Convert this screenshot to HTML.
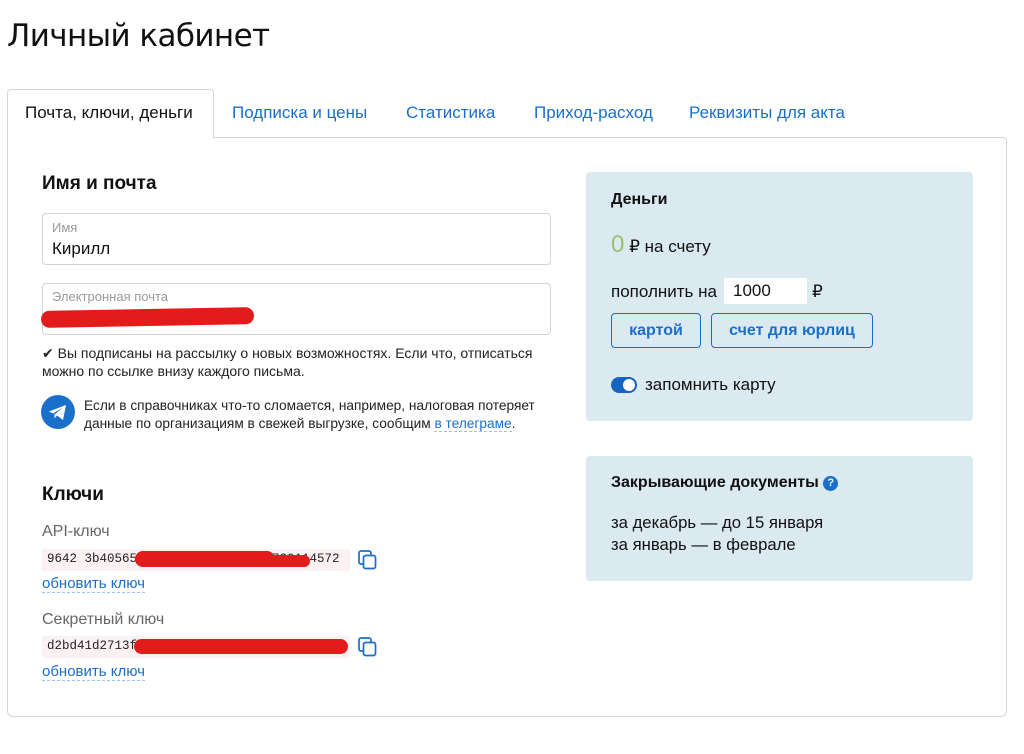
<!DOCTYPE html>
<html><head><meta charset="utf-8"><style>
*{box-sizing:border-box;margin:0;padding:0}
body{width:1024px;height:754px;background:#fff;font-family:"Liberation Sans","DejaVu Sans",sans-serif;color:#111;position:relative;overflow:hidden}
.a{position:absolute;white-space:nowrap}
.link{color:#1a6fc9}
.panel{position:absolute;left:7px;top:137px;width:1000px;height:580px;border:1px solid #d6d6d6;border-radius:0 4px 6px 6px}
.tab{position:absolute;left:7px;top:89px;width:207px;height:49px;border:1px solid #d6d6d6;border-bottom:none;background:#fff;border-radius:4px 4px 0 0}
.inp{position:absolute;left:42px;width:509px;height:52px;border:1px solid #d4d4d4;border-radius:4px}
.code{position:absolute;left:42px;width:308px;height:22px;background:#fbf1f3;border-radius:3px;font-family:"Liberation Mono",monospace;font-size:12.5px;padding:3px 0 0 5px;color:#222;overflow:hidden}
.box{position:absolute;left:586px;width:387px;background:#dbe9f0;border-radius:4px}
.btn{position:absolute;top:313px;height:35px;border:1px solid #1a6fc9;border-radius:4px;color:#1a6fc9;font-weight:bold;font-size:16px;text-align:center;line-height:33px}
.ul{border-bottom:1px dashed #9cc3ea}
</style></head><body>
<div class="a" style="left:7px;top:18px;font-size:31px;font-family:'DejaVu Sans',sans-serif;letter-spacing:-0.6px">Личный кабинет</div>
<div class="panel"></div>
<div class="tab"></div>
<div class="a" style="left:25px;top:103px;font-size:17px">Почта, ключи, деньги</div>
<div class="a link" style="left:232px;top:103px;font-size:17px">Подписка и цены</div>
<div class="a link" style="left:406px;top:103px;font-size:17px">Статистика</div>
<div class="a link" style="left:534px;top:103px;font-size:17px">Приход-расход</div>
<div class="a link" style="left:689px;top:103px;font-size:17px">Реквизиты для акта</div>

<div class="a" style="left:42px;top:173px;font-size:19px;font-weight:bold">Имя и почта</div>
<div class="inp" style="top:213px"></div>
<div class="a" style="left:52px;top:220px;font-size:13px;color:#999">Имя</div>
<div class="a" style="left:52px;top:239px;font-size:17px">Кирилл</div>
<div class="inp" style="top:283px"></div>
<div class="a" style="left:52px;top:289px;font-size:13px;color:#999">Электронная почта</div>
<div class="a" style="left:41px;top:309px;width:213px;height:17px;background:#e31b1b;border-radius:9px;transform:rotate(-1deg)"></div>
<div class="a" style="left:42px;top:344px;font-size:14px;line-height:18px;color:#222">✔ Вы подписаны на рассылку о новых возможностях. Если что, отписаться<br>можно по ссылке внизу каждого письма.</div>
<svg class="a" style="left:41px;top:395px" width="34" height="34" viewBox="0 0 34 34"><circle cx="17" cy="17" r="17" fill="#1a6fc9"/><path d="M8 16.5 L25 10 L22 25 L16 20.5 L13.5 23.5 L13.5 19.5 L22 12.5 L12 18.5 Z" fill="#fff"/></svg>
<div class="a" style="left:84px;top:397px;font-size:13.7px;line-height:18px;color:#222">Если в справочниках что-то сломается, например, налоговая потеряет<br>данные по организациям в свежей выгрузке, сообщим <span class="link ul">в телеграме</span>.</div>

<div class="a" style="left:42px;top:484px;font-size:19px;font-weight:bold">Ключи</div>
<div class="a" style="left:42px;top:523px;font-size:16px;color:#666">API-ключ</div>
<div class="code" style="top:549px">9642 3b40565900000000000000000730114572</div>
<div class="a" style="left:135px;top:551px;width:140px;height:16px;background:#e31b1b;border-radius:8px"></div>
<div class="a" style="left:210px;top:555px;width:100px;height:12px;background:#e31b1b;border-radius:6px"></div>
<svg class="a" style="left:358px;top:550px" width="20" height="21" viewBox="0 0 20 21"><rect x="1" y="1" width="12" height="13" rx="2" fill="none" stroke="#1a6fc9" stroke-width="1.7"/><rect x="5.5" y="5.5" width="12" height="13" rx="2" fill="#fff" stroke="#1a6fc9" stroke-width="1.7"/></svg>
<div class="a link ul" style="left:42px;top:575px;font-size:15px">обновить ключ</div>
<div class="a" style="left:42px;top:611px;font-size:16px;color:#666">Секретный ключ</div>
<div class="code" style="top:636px">d2bd41d2713f</div>
<div class="a" style="left:134px;top:639px;width:214px;height:15px;background:#e31b1b;border-radius:8px"></div>
<svg class="a" style="left:358px;top:637px" width="20" height="21" viewBox="0 0 20 21"><rect x="1" y="1" width="12" height="13" rx="2" fill="none" stroke="#1a6fc9" stroke-width="1.7"/><rect x="5.5" y="5.5" width="12" height="13" rx="2" fill="#fff" stroke="#1a6fc9" stroke-width="1.7"/></svg>
<div class="a link ul" style="left:42px;top:663px;font-size:15px">обновить ключ</div>

<div class="box" style="top:172px;height:249px"></div>
<div class="a" style="left:611px;top:191px;font-size:16px;font-weight:bold">Деньги</div>
<div class="a" style="left:611px;top:231px;font-size:17px"><span style="color:#9bc16a;font-size:24px">0</span> ₽ на счету</div>
<div class="a" style="left:611px;top:282px;font-size:17px">пополнить на</div>
<div class="a" style="left:724px;top:278px;width:83px;height:26px;background:#fff;font-size:17px;padding:3px 0 0 9px">1000</div>
<div class="a" style="left:812px;top:282px;font-size:17px">₽</div>
<div class="btn" style="left:611px;width:90px">картой</div>
<div class="btn" style="left:711px;width:162px">счет для юрлиц</div>
<div class="a" style="left:611px;top:377px;width:26px;height:16px;background:#1565c0;border-radius:8px"><div style="position:absolute;right:2px;top:2px;width:12px;height:12px;background:#fff;border-radius:50%"></div></div>
<div class="a" style="left:645px;top:375px;font-size:17px">запомнить карту</div>

<div class="box" style="top:456px;height:125px"></div>
<div class="a" style="left:611px;top:474px;font-size:16px;font-weight:bold">Закрывающие документы <span style="display:inline-block;width:15px;height:15px;border-radius:50%;background:#1a6fc9;color:#fff;font-size:11px;text-align:center;line-height:15px;vertical-align:1px">?</span></div>
<div class="a" style="left:611px;top:512px;font-size:16.7px;line-height:22px">за декабрь — до 15 января<br>за январь — в феврале</div>
</body></html>
